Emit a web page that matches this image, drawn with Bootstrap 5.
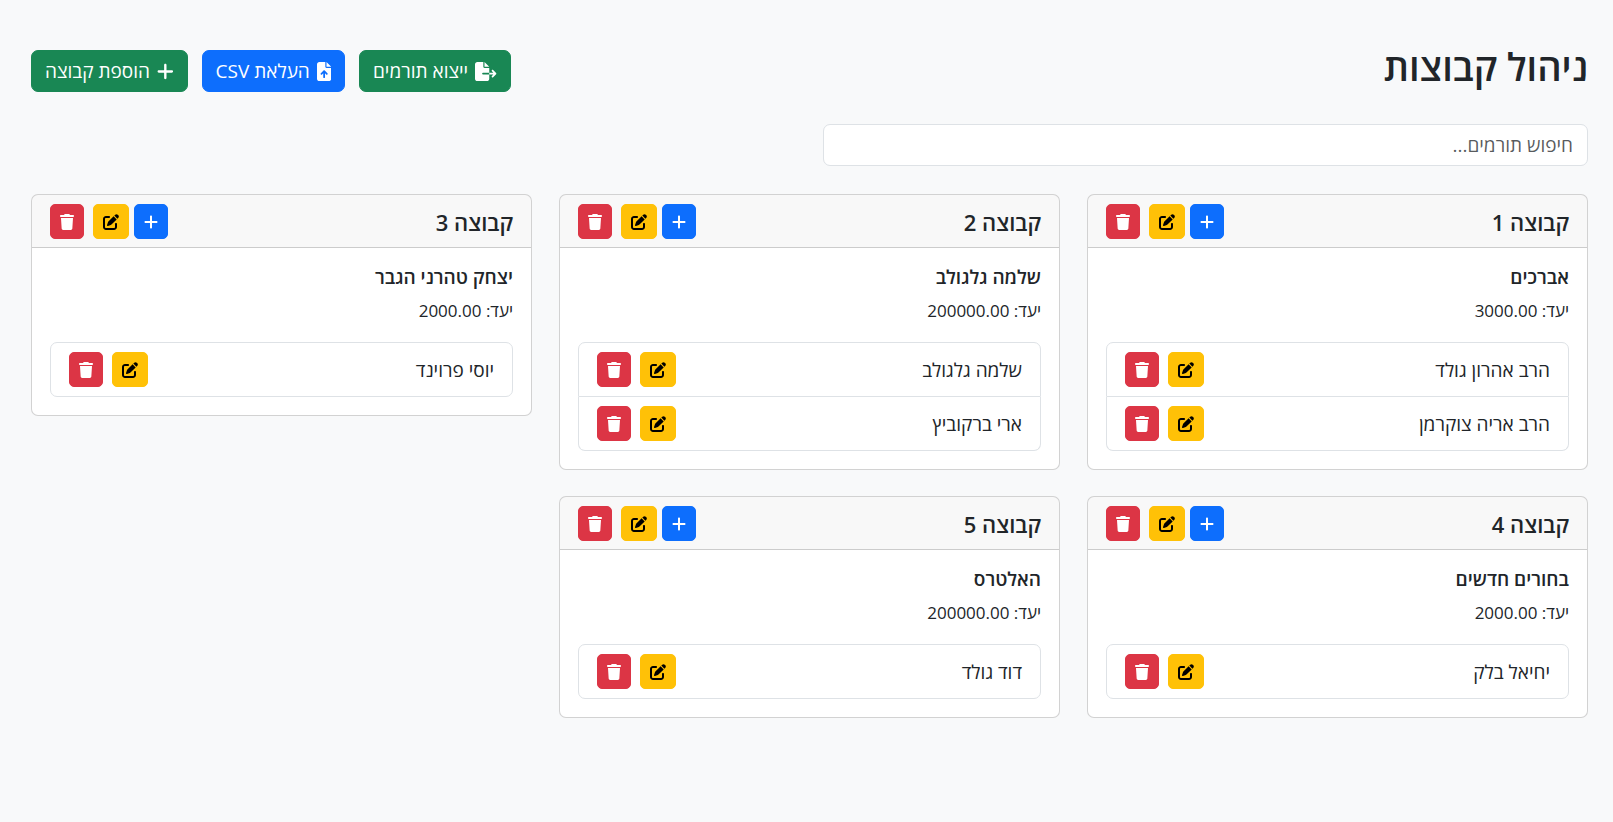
<!DOCTYPE html>
<html lang="he" dir="rtl">
<head>
<meta charset="utf-8">
<meta name="viewport" content="width=device-width, initial-scale=1">
<title>ניהול קבוצות</title>
<link href="https://cdn.jsdelivr.net/npm/bootstrap@5.3.0/dist/css/bootstrap.min.css" rel="stylesheet">
<style>
body{font-family:"Open Sans","Noto Sans",sans-serif;font-size:19px;line-height:26px;background:#f8f9fa}
.page{padding:40px 25px 40px 31px}
.page-title{font-size:38px;line-height:53px;font-weight:600;margin-bottom:9px}
.toolbar{gap:14px}
.toolbar .btn{font-size:19px;line-height:26px;padding:7px 13px;border-radius:7px}
.icon{fill:currentColor;height:19px;width:auto;vertical-align:-3px}
.toolbar .icon{margin-left:2px}
.btn-sm .icon{height:16px;display:block}
.btn-sm{display:flex;align-items:center;height:35px;padding:0 9px;border-radius:5px}
.groups{--bs-gutter-x:27px;--bs-gutter-y:26px}
.search{--bs-gutter-x:27px;margin-top:22px;margin-bottom:28px}
.search .form-control{font-size:19px;line-height:26px;padding:7px 14px;border-radius:7px}
.card{border-radius:7px}
.card-header{padding:9px 18px 8px}
.card-header h2{font-size:22px;line-height:26px;font-weight:600}
.card-body{padding:18px}
.card-body h3{font-size:19px;line-height:22px;font-weight:600;margin-bottom:10px}
.card-body p{font-size:17px;line-height:26px;margin-bottom:18px}
.list-group{border-radius:7px;padding:0}
.list-group-item{padding:9px 18px}
.actions{gap:9px}
.pair{gap:5px}
</style>
</head>
<body>
<svg class="d-none" aria-hidden="true">
<symbol id="plus" viewBox="0 0 448 512"><path d="M256 80c0-17.700-14.300-32-32-32s-32 14.300-32 32V224H48c-17.700 0-32 14.300-32 32s14.300 32 32 32H192V432c0 17.700 14.300 32 32 32s32-14.300 32-32V288H400c17.700 0 32-14.300 32-32s-14.300-32-32-32H256V80z"/></symbol>
<symbol id="trash" viewBox="0 0 448 512"><path d="M135.200 17.700L128 32H32C14.300 32 0 46.300 0 64S14.300 96 32 96H416c17.700 0 32-14.300 32-32s-14.300-32-32-32H320l-7.200-14.300C307.400 6.800 296.300 0 284.200 0H163.800c-12.100 0-23.200 6.800-28.600 17.700zM416 128H32L53.200 467c1.600 25.300 22.600 45 47.900 45H346.900c25.300 0 46.300-19.700 47.900-45L416 128z"/></symbol>
<symbol id="edit" viewBox="0 0 512 512"><path d="M471.600 21.700c-21.900-21.900-57.300-21.900-79.200 0L362.300 51.700l97.900 97.900 30.100-30.100c21.900-21.900 21.900-57.300 0-79.200L471.600 21.700zm-299.200 220c-6.100 6.100-10.800 13.600-13.500 21.900l-29.600 88.800c-2.900 8.600-.6 18.100 5.800 24.600s15.900 8.700 24.600 5.800l88.800-29.600c8.200-2.700 15.700-7.400 21.900-13.500L437.700 172.300 339.700 74.300 172.400 241.700zM96 64C43 64 0 107 0 160V416c0 53 43 96 96 96H352c53 0 96-43 96-96V320c0-17.700-14.300-32-32-32s-32 14.300-32 32v96c0 17.700-14.300 32-32 32H96c-17.700 0-32-14.300-32-32V160c0-17.700 14.300-32 32-32h96c17.700 0 32-14.300 32-32s-14.300-32-32-32H96z"/></symbol>
</svg>
<main class="container-fluid page">
  <header class="d-flex flex-wrap justify-content-between align-items-center">
    <h1 class="page-title">ניהול קבוצות</h1>
    <div class="toolbar d-flex flex-wrap">
      <button type="button" class="btn btn-success"><svg class="icon" viewBox="0 0 576 512" aria-hidden="true"><path d="M0 64C0 28.700 28.700 0 64 0H224V128c0 17.700 14.300 32 32 32H384V288H216c-13.300 0-24 10.700-24 24s10.700 24 24 24H384V448c0 35.300-28.700 64-64 64H64c-35.300 0-64-28.700-64-64V64zM384 336V288H494.100l-39-39c-9.400-9.400-9.400-24.600 0-33.900s24.600-9.400 33.900 0l80 80c9.400 9.400 9.400 24.600 0 33.900l-80 80c-9.400 9.400-24.600 9.400-33.900 0s-9.400-24.600 0-33.900l39-39H384zm0-208H256V0L384 128z"/></svg> ייצוא תורמים</button>
      <button type="button" class="btn btn-primary"><svg class="icon" viewBox="0 0 384 512" aria-hidden="true"><path d="M64 0C28.700 0 0 28.700 0 64V448c0 35.300 28.700 64 64 64H320c35.300 0 64-28.700 64-64V160H256c-17.700 0-32-14.300-32-32V0H64zM256 0V128H384L256 0zM216 408c0 13.300-10.700 24-24 24s-24-10.700-24-24V305.900l-31 31c-9.400 9.400-24.600 9.400-33.900 0s-9.400-24.600 0-33.900l72-72c9.400-9.400 24.600-9.400 33.900 0l72 72c9.400 9.400 9.400 24.600 0 33.900s-24.600 9.400-33.900 0l-31-31V408z"/></svg> העלאת CSV</button>
      <button type="button" class="btn btn-success"><svg class="icon" viewBox="0 0 448 512" aria-hidden="true"><use href="#plus"/></svg> הוספת קבוצה</button>
    </div>
  </header>
  <div class="row search">
    <div class="col-md-6"><input type="search" class="form-control" placeholder="חיפוש תורמים..." aria-label="חיפוש תורמים"></div>
  </div>
  <div class="row groups row-cols-1 row-cols-md-2 row-cols-lg-3 align-items-start" id="groups"></div>
</main>
<script src="https://cdn.jsdelivr.net/npm/bootstrap@5.3.0/dist/js/bootstrap.bundle.min.js"></script>
<script>
const groups = [
  { number: 1, name: 'אברכים', goal: '3000.00', donors: ['הרב אהרון גולד', 'הרב אריה צוקרמן'] },
  { number: 2, name: 'שלמה גלגולב', goal: '200000.00', donors: ['שלמה גלגולב', 'ארי ברקוביץ'] },
  { number: 3, name: 'יצחק טהרני הגבר', goal: '2000.00', donors: ['יוסי פרוינד'] },
  { number: 4, name: 'בחורים חדשים', goal: '2000.00', donors: ['יחיאל בלק'] },
  { number: 5, name: 'האלטרס', goal: '200000.00', donors: ['דוד גולד'] }
];
const button = (color, icon, width, label) =>
  `<button type="button" class="btn btn-sm btn-${color}" aria-label="${label}"><svg class="icon" viewBox="0 0 ${width} 512"><use href="#${icon}"/></svg></button>`;
const add = button('primary', 'plus', 448, 'הוספה');
const edit = button('warning', 'edit', 512, 'עריכה');
const remove = button('danger', 'trash', 448, 'מחיקה');
const donorRow = name => `
  <li class="list-group-item d-flex justify-content-between align-items-center">
    <span>${name}</span><div class="actions d-flex">${edit}${remove}</div>
  </li>`;
document.getElementById('groups').innerHTML = groups.map(g => `
  <div class="col">
    <section class="card">
      <div class="card-header d-flex justify-content-between align-items-center">
        <h2 class="mb-0">קבוצה ${g.number}</h2>
        <div class="actions d-flex"><div class="pair d-flex">${add}${edit}</div>${remove}</div>
      </div>
      <div class="card-body">
        <h3>${g.name}</h3>
        <p>יעד: ${g.goal}</p>
        <ul class="list-group">${g.donors.map(donorRow).join('')}</ul>
      </div>
    </section>
  </div>`).join('');
</script>
</body>
</html>
